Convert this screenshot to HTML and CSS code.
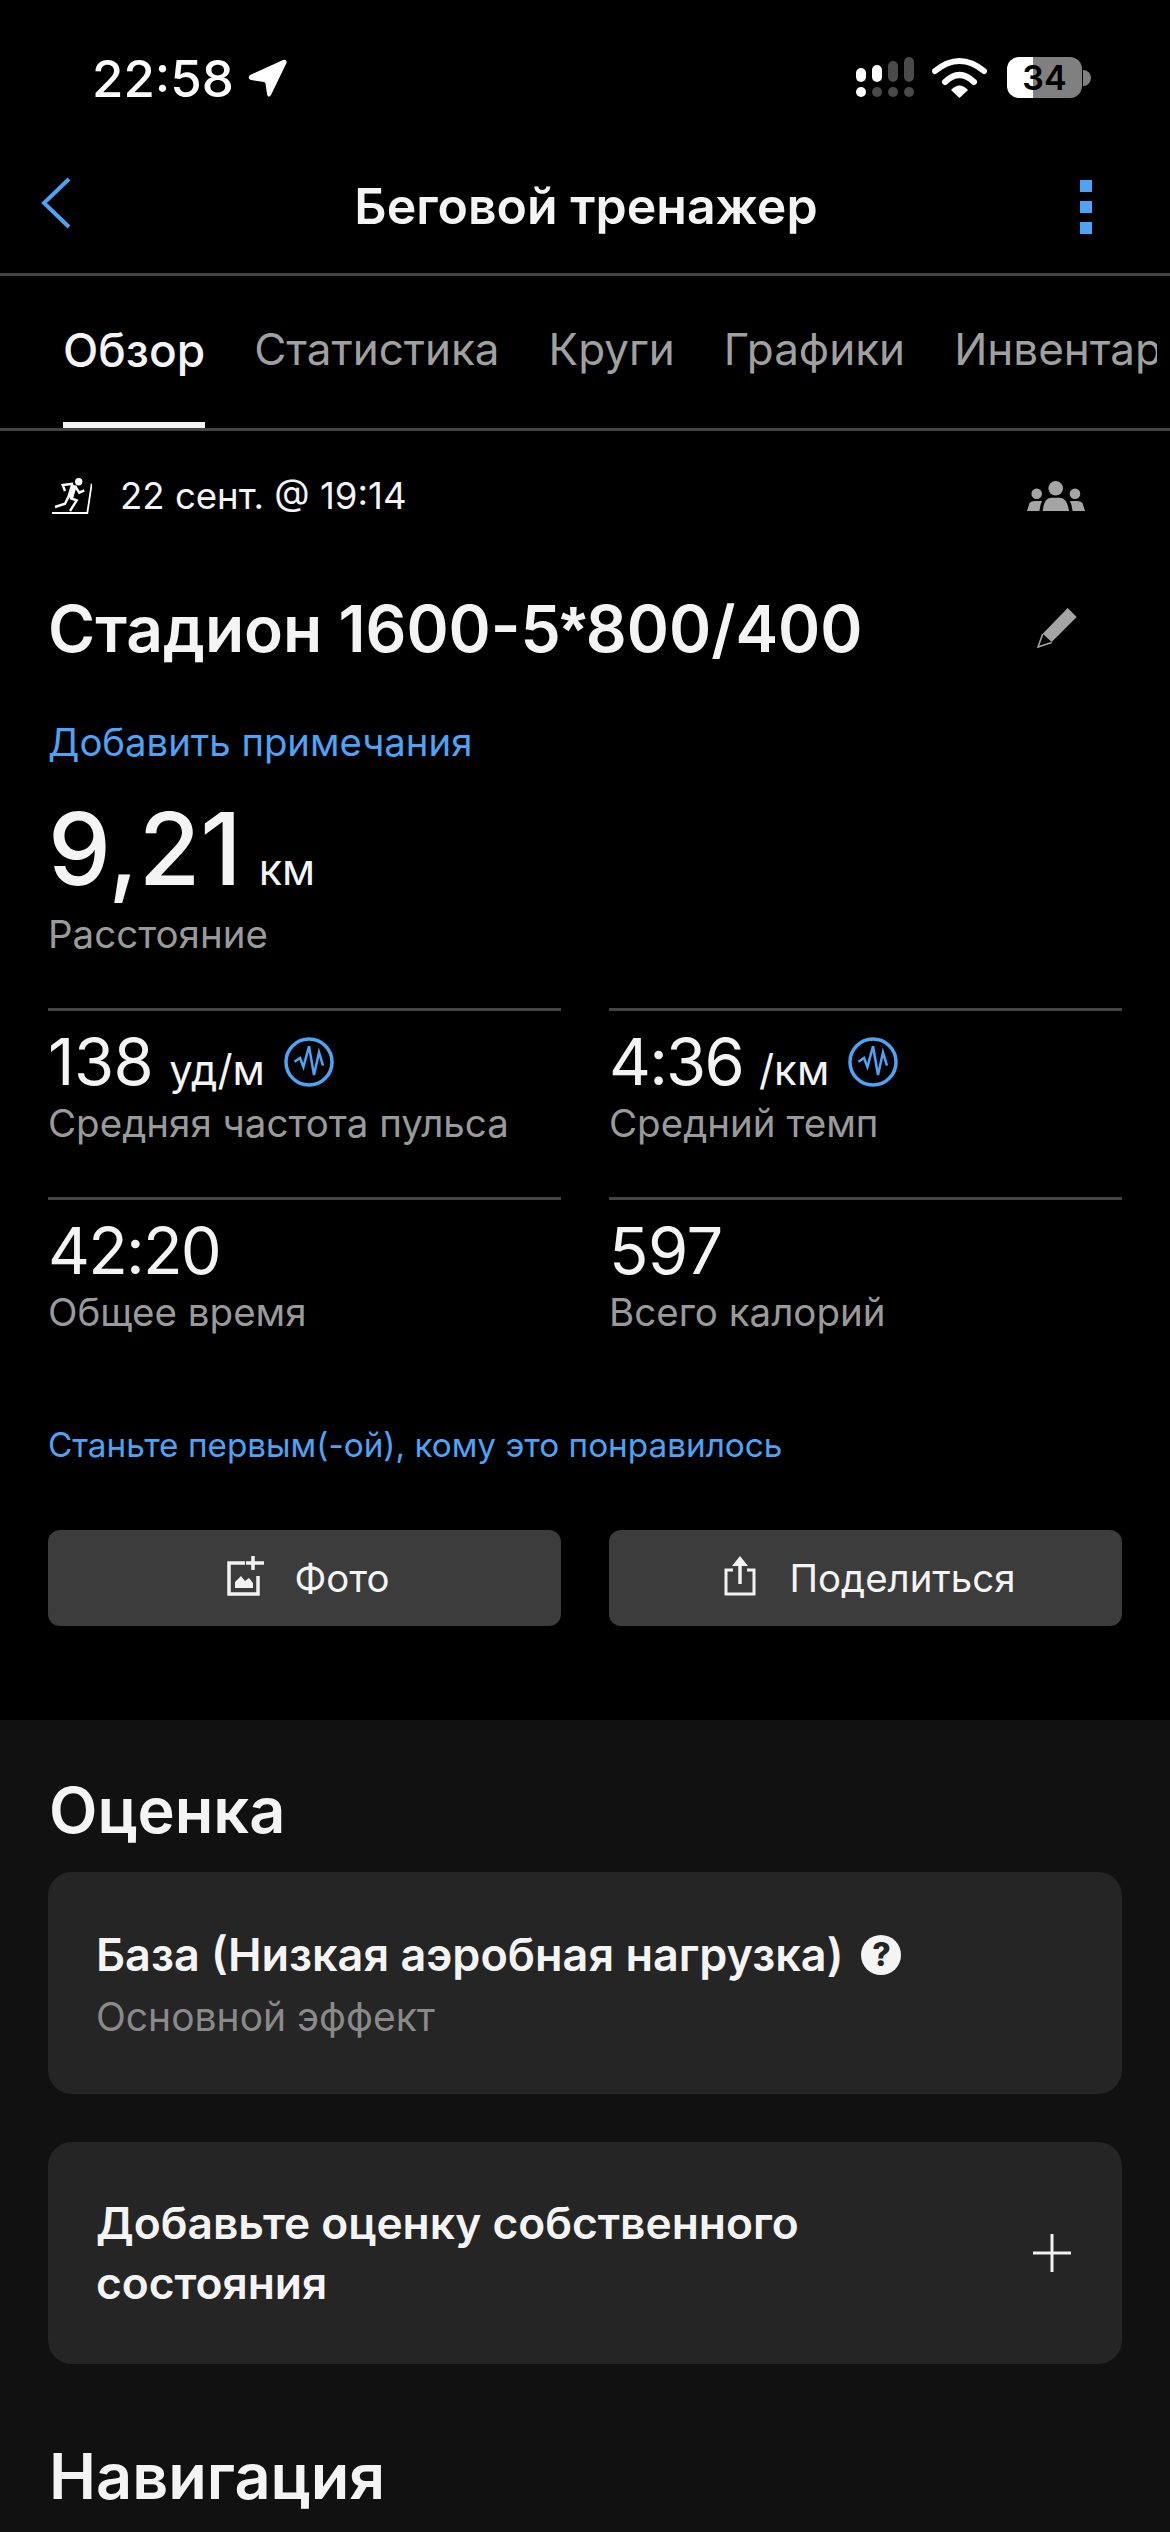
FILE: index.html
```html
<!DOCTYPE html>
<html lang="ru">
<head>
    <meta charset="UTF-8">
    <meta name="viewport" content="width=device-width, initial-scale=1.0">
    <title>Беговой тренажер</title>
    <link rel="stylesheet" href="styles.css">
</head>
<body>
    <div class="screen">
        <div class="status-bar">
            <div class="status-time">
                <span>22:58</span>
                <svg class="icon-location" viewBox="0 0 40 40"><path d="M35 2 Q39 1 38.500 5 L23 37 Q20 41 19 36 L17.500 25.500 Q17 24 16 24 L3 22 Q-1 20 2 17 Z" fill="#fff"/></svg>
            </div>
            <div class="status-icons">
                <svg class="icon-cell" viewBox="0 0 58 41">
                    <rect x="0" y="11" width="10" height="14" rx="5" fill="#fff"/>
                    <rect x="16" y="8" width="10" height="17" rx="5" fill="#fff"/>
                    <rect x="32" y="4" width="10" height="21" rx="5" fill="#4a4a4a"/>
                    <rect x="48" y="0" width="10" height="25" rx="5" fill="#4a4a4a"/>
                    <circle cx="5" cy="35" r="5" fill="#fff"/>
                    <circle cx="21" cy="35" r="5" fill="#4a4a4a"/>
                    <circle cx="37" cy="35" r="5" fill="#4a4a4a"/>
                    <circle cx="53" cy="35" r="5" fill="#4a4a4a"/>
                </svg>
                <svg class="icon-wifi" viewBox="0 0 55 41">
                    <path d="M3 14 Q27.500 -6 52 14" fill="none" stroke="#fff" stroke-width="6" stroke-linecap="round"/>
                    <path d="M13 25 Q27.500 11 42 25" fill="none" stroke="#fff" stroke-width="6" stroke-linecap="round"/>
                    <path d="M19 33 Q27.500 24 36 33 L27.500 41 Z" fill="#fff"/>
                </svg>
                <div class="battery"><span>34</span></div>
                <div class="battery-nub"></div>
            </div>
        </div>

        <div class="nav-bar">
            <svg class="icon-back" viewBox="0 0 30 52"><path d="M28 2 L3 26 L28 50" fill="none" stroke="#4da3f5" stroke-width="4"/></svg>
            <h1 class="nav-title">Беговой тренажер</h1>
            <div class="kebab"><i></i><i></i><i></i></div>
        </div>

        <div class="tabs-bar">
            <div class="tabs">
                <div class="tab active">Обзор</div>
                <div class="tab">Статистика</div>
                <div class="tab">Круги</div>
                <div class="tab">Графики</div>
                <div class="tab">Инвентарь</div>
            </div>
        </div>

        <div class="overview">
            <div class="meta-row">
                <svg class="icon-treadmill" viewBox="0 0 40 36">
                    <circle cx="26.700" cy="3.700" r="3.700" fill="#fff"/>
                    <path d="M0 35 H35.300 L39.700 5.700" fill="none" stroke="#fff" stroke-width="1.800"/>
                    <path d="M22 7 L18 20" fill="none" stroke="#fff" stroke-width="6"/>
                    <path d="M13 13 L10.700 7 L21 5.700 M23 8 L27.300 14.700 L32.300 12.300 M18 20 L24.700 22.300 L18 33 M16.300 19 L13 25.700 L3 29" fill="none" stroke="#fff" stroke-width="2.400"/>
                </svg>
                <span class="meta-date">22 сент. @ 19:14</span>
                <svg class="icon-group" viewBox="0 0 58 30">
                    <circle cx="28.700" cy="7.300" r="7.300" fill="#a5a5a5"/>
                    <path d="M15.700 30 Q17 16.700 24 16.700 H33 Q40 16.700 42 30 Z" fill="#a5a5a5"/>
                    <circle cx="9.700" cy="12.700" r="5.300" fill="#a5a5a5"/>
                    <path d="M0 30 L2.500 22 Q4 20 8 20 H15 Q13 24 12.500 30 Z" fill="#a5a5a5"/>
                    <circle cx="48" cy="12.700" r="5.300" fill="#a5a5a5"/>
                    <path d="M58 30 L55.500 22 Q54 20 50 20 H43 Q45 24 45.500 30 Z" fill="#a5a5a5"/>
                </svg>
            </div>

            <div class="title-row">
                <h2 class="activity-title">Стадион 1600-5<span class="title-star">*</span>800/400</h2>
                <svg class="icon-pencil" viewBox="0 0 40 40">
                    <path d="M30.700 0 L39.700 9 L14.700 34 L5.700 25.700 Z" fill="#a5a5a5"/>
                    <path d="M5.700 26 L1 39 L14.700 34.500" fill="none" stroke="#a5a5a5" stroke-width="1.600"/>
                </svg>
            </div>

            <a class="notes-link">Добавить примечания</a>

            <div class="distance">
                <span class="distance-value">9,21</span>
                <span class="distance-unit">км</span>
            </div>
            <div class="stat-label">Расстояние</div>

            <div class="stats-grid">
                <div class="stat">
                    <div class="stat-value">138 <small>уд/м</small>
                        <svg class="icon-wave" viewBox="0 0 50 50"><circle cx="25" cy="25" r="23" fill="none" stroke="#4da3f5" stroke-width="3.500"/><path d="M10.500 24.700 L16 21 L19.400 30 L25 9.300 L30 38 L35 15.300 L39 28.700" fill="none" stroke="#4da3f5" stroke-width="2.500"/></svg>
                    </div>
                    <div class="stat-label">Средняя частота пульса</div>
                </div>
                <div class="stat">
                    <div class="stat-value time-value">4:36 <small>/км</small>
                        <svg class="icon-wave" viewBox="0 0 50 50"><circle cx="25" cy="25" r="23" fill="none" stroke="#4da3f5" stroke-width="3.500"/><path d="M10.500 24.700 L16 21 L19.400 30 L25 9.300 L30 38 L35 15.300 L39 28.700" fill="none" stroke="#4da3f5" stroke-width="2.500"/></svg>
                    </div>
                    <div class="stat-label">Средний темп</div>
                </div>
                <div class="stat">
                    <div class="stat-value time-value">42:20</div>
                    <div class="stat-label">Общее время</div>
                </div>
                <div class="stat">
                    <div class="stat-value">597</div>
                    <div class="stat-label">Всего калорий</div>
                </div>
            </div>

            <a class="like-link">Станьте первым(-ой), кому это понравилось</a>

            <div class="actions">
                <div class="action-btn">
                    <svg class="icon-photo" viewBox="0 0 38 40">
                        <path d="M18 7 H2 V38 H31 V20" fill="none" stroke="#f2f2f2" stroke-width="3.500"/>
                        <path d="M26 0 V14 M19 7 H37" stroke="#f2f2f2" stroke-width="3.500"/>
                        <path d="M8 32 V26 L14 20 L18 25 L22 22 L26 27 V32 Z" fill="#f2f2f2"/>
                    </svg>
                    <span>Фото</span>
                </div>
                <div class="action-btn">
                    <svg class="icon-share" viewBox="0 0 32 40">
                        <path d="M9 14 H2 V38 H30 V14 H23" fill="none" stroke="#f2f2f2" stroke-width="3"/>
                        <path d="M16 28 V4" stroke="#f2f2f2" stroke-width="3.500"/>
                        <path d="M16 0 L24 10 H8 Z" fill="#f2f2f2"/>
                    </svg>
                    <span>Поделиться</span>
                </div>
            </div>
        </div>

        <div class="details">
            <h3 class="section-title">Оценка</h3>
            <div class="card card-effect">
                <div class="card-heading">
                    <span>База (Низкая аэробная нагрузка)</span>
                    <span class="help-badge">?</span>
                </div>
                <div class="card-sub">Основной эффект</div>
            </div>
            <div class="card card-add">
                <div class="card-heading-wrap">Добавьте оценку собственного состояния</div>
                <svg class="icon-plus" viewBox="0 0 38 38"><path d="M19 0 V38 M0 19 H38" stroke="#f2f2f2" stroke-width="3"/></svg>
            </div>
            <h3 class="section-title nav-section">Навигация</h3>
        </div>
    </div>
</body>
</html>
```

FILE: styles.css
```css
/* Экран активности, тёмная тема */
* {
    box-sizing: border-box;
}
body {
    margin: 0;
    background-color: #000;
    font-family: Inter, "Liberation Sans", sans-serif;
    color: #f4f4f4;
}
h1, h2, h3 {
    margin: 0;
}
.screen {
    width: 1170px;
    height: 2532px;
    overflow: hidden;
    display: flex;
    flex-direction: column;
}

/* Статус-бар */
.status-bar {
    height: 120px;
    padding: 46px 79px 0 92px;
    display: flex;
    justify-content: space-between;
    align-items: flex-start;
}
.status-time {
    display: flex;
    align-items: center;
    gap: 14px;
    height: 64px;
    font-size: 51px;
    font-weight: 500;
    color: #fff;
}
.icon-location {
    width: 40px;
    height: 40px;
}
.status-icons {
    display: flex;
    align-items: center;
    margin-top: 11px;
}
.icon-cell {
    width: 58px;
    height: 41px;
    margin-right: 18px;
}
.icon-wifi {
    width: 55px;
    height: 41px;
    margin-right: 20px;
}
.battery {
    width: 75px;
    height: 41px;
    border-radius: 12px;
    background: linear-gradient(to right, #fff 35%, #808080 35%);
    color: #000;
    font-size: 34px;
    font-weight: 600;
    text-align: center;
    line-height: 41px;
}
.battery-nub {
    width: 8px;
    height: 16px;
    margin-left: 1px;
    background-color: #808080;
    border-radius: 0 8px 8px 0;
}

/* Навигация */
.nav-bar {
    height: 156px;
    padding: 0 78px 0 41px;
    border-bottom: 3px solid #444;
    display: flex;
    align-items: center;
    justify-content: space-between;
}
.icon-back {
    width: 30px;
    height: 52px;
    margin-top: 13px;
}
.nav-title {
    font-size: 50px;
    font-weight: 600;
    margin-top: 19px;
    margin-left: 21px;
}
.kebab {
    display: flex;
    flex-direction: column;
    gap: 9px;
    margin-top: 21px;
}
.kebab i {
    display: block;
    width: 12px;
    height: 12px;
    background-color: #4da3f5;
}

/* Вкладки */
.tabs-bar {
    height: 155px;
    border-bottom: 3px solid #444;
}
.tabs {
    width: 1157px;
    height: 152px;
    padding-left: 63px;
    display: flex;
    gap: 49px;
    overflow: hidden;
    white-space: nowrap;
}
.tab {
    height: 152px;
    padding-top: 46px;
    font-size: 44px;
    color: #a0a0a0;
    border-bottom: 6px solid transparent;
}
.tab.active {
    color: #f4f4f4;
    font-size: 46px;
    font-weight: 500;
    border-bottom-color: #f4f4f4;
}

/* Обзор */
.overview {
    height: 1289px;
    padding: 0 48px;
    display: flex;
    flex-direction: column;
}
.meta-row {
    display: flex;
    align-items: center;
    height: 42px;
    margin-top: 44px;
    padding-left: 4px;
}
.icon-treadmill {
    width: 40px;
    height: 36px;
}
.meta-date {
    font-size: 36.600px;
    margin-left: 28px;
}
.icon-group {
    width: 58px;
    height: 30px;
    margin-left: auto;
    margin-right: 37px;
}
.title-row {
    display: flex;
    align-items: center;
    margin-top: 72px;
}
.activity-title {
    font-size: 64px;
    font-weight: 600;
    line-height: 80px;
}
.title-star {
    font-family: "Liberation Sans", sans-serif;
}
.icon-pencil {
    width: 40px;
    height: 40px;
    margin: -3px 45px 0 auto;
}
.notes-link {
    display: block;
    margin-top: 49px;
    font-size: 38.300px;
    line-height: 46px;
    color: #4da3f5;
}
.distance {
    display: flex;
    align-items: baseline;
    gap: 17px;
    margin-top: 28px;
    margin-bottom: 7px;
    height: 111px;
    line-height: 111px;
}
.distance-value {
    font-size: 100px;
    font-weight: 500;
}
.distance-unit {
    font-size: 43px;
}
.stat-label {
    font-size: 38.500px;
    line-height: 46px;
    color: #9a9a9a;
}
.stats-grid {
    display: grid;
    grid-template-columns: 513px 513px;
    grid-auto-rows: 189px;
    column-gap: 48px;
    margin-top: 51px;
}
.stat {
    border-top: 3px solid #444;
    padding-top: 13px;
}
.stat-value {
    display: flex;
    align-items: baseline;
    gap: 16px;
    height: 76px;
    font-size: 65px;
    line-height: 76px;
    letter-spacing: -0.500px;
}
.time-value {
    letter-spacing: -1.800px;
}
.stat-value small {
    font-size: 42px;
    letter-spacing: 0;
}
.icon-wave {
    width: 50px;
    height: 50px;
    align-self: center;
    margin-left: 3px;
}
.like-link {
    display: block;
    margin-top: 39px;
    font-size: 33.300px;
    line-height: 40px;
    color: #4da3f5;
}
.actions {
    display: flex;
    gap: 48px;
    margin-top: 65px;
}
.action-btn {
    width: 513px;
    height: 96px;
    padding-left: 8px;
    border-radius: 12px;
    background-color: #3c3c3c;
    display: flex;
    align-items: center;
    justify-content: center;
    font-size: 38.400px;
}
.icon-photo {
    width: 38px;
    height: 40px;
    margin: -4px 29px 0 0;
}
.icon-share {
    width: 32px;
    height: 40px;
    margin: -4px 34px 0 0;
}

/* Оценка и навигация */
.details {
    flex: 1;
    background-color: #111;
    padding: 48px 48px 0;
}
.section-title {
    font-size: 63px;
    font-weight: 600;
    line-height: 84px;
    padding-left: 1px;
}
.card {
    height: 222px;
    margin-top: 20px;
    border-radius: 24px;
    background-color: #252525;
    padding: 0 48px;
}
.card-effect {
    padding-top: 57px;
}
.card-heading {
    display: flex;
    align-items: center;
    gap: 18px;
    font-size: 45px;
    font-weight: 600;
    line-height: 52px;
}
.help-badge {
    width: 40px;
    height: 40px;
    border-radius: 50%;
    background-color: #f4f4f4;
    color: #252525;
    font-size: 32px;
    font-weight: 800;
    line-height: 40px;
    text-align: center;
}
.card-sub {
    margin-top: 14px;
    font-size: 39px;
    line-height: 44px;
    color: #8a8a8a;
}
.card-add {
    margin-top: 48px;
    display: flex;
    align-items: center;
    justify-content: space-between;
}
.card-heading-wrap {
    width: 800px;
    font-size: 44.300px;
    font-weight: 600;
    line-height: 60px;
}
.icon-plus {
    width: 38px;
    height: 38px;
    margin-right: 3px;
}
.nav-section {
    margin-top: 70px;
}
```
